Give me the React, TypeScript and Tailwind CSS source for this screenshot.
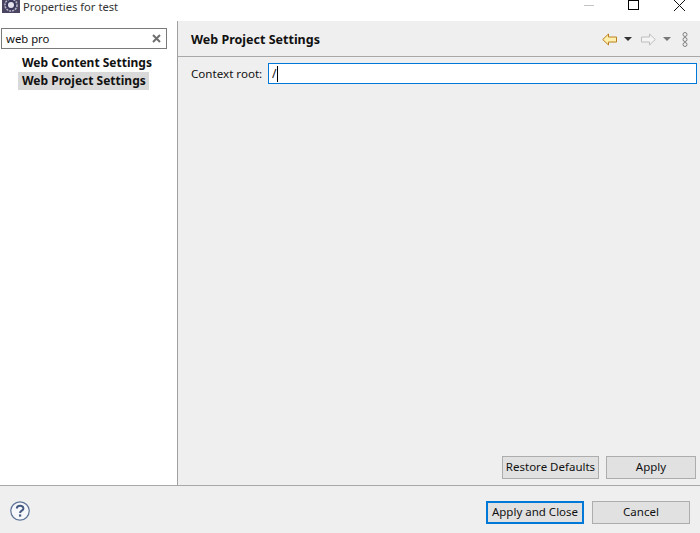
import React from 'react';

const Btn: React.FC<{ label: string; className: string }> = ({ label, className }) => (
  <button className={`flex items-center justify-center bg-[#e1e1e1] pb-[1px] text-[11.5px] leading-none text-[#111] ${className}`}>
    {label}
  </button>
);

const App: React.FC = () => {
  return (
    <div className="flex h-[533px] w-[700px] flex-col overflow-hidden bg-white font-['Noto_Sans','Liberation_Sans',sans-serif] text-[12px] text-[#111]">
      {/* title bar */}
      <div className="flex h-[21px] shrink-0 items-start">
        <svg width="18" height="14" viewBox="0 0 18 14" className="ml-[2px] shrink-0">
          <rect x="0" y="0" width="18" height="13" fill="#4a4560" />
          <circle cx="9" cy="5" r="6" fill="#3c3a5c" stroke="#b9b7c8" strokeWidth="1.6" strokeDasharray="2 1" />
          <circle cx="9" cy="5" r="3" fill="#e4e2ec" />
        </svg>
        <span className="ml-[3px] text-[11.2px] leading-[13px] text-[#333]">Properties for test</span>
        <div className="ml-auto flex items-start">
          <div className="mt-[5px] h-px w-[10px] bg-[#c4c4c4]" />
          <div className="ml-[34px] h-[10px] w-[11px] border border-black" />
          <svg width="11" height="11" viewBox="0 0 11 11" className="ml-[35px] mr-[15px]">
            <path d="M0 0 L11 11 M11 0 L0 11" stroke="#111" strokeWidth="1" />
          </svg>
        </div>
      </div>

      <div className="flex min-h-0 flex-1">
        {/* sidebar */}
        <div className="flex w-[178px] shrink-0 flex-col border-r border-[#a0a0a0] pl-[1px] pt-[7px]">
          <div className="flex h-[21px] w-[166px] items-center border border-[#7a7a7a] pl-[4px] pr-[5px]">
            <span className="text-[11.3px] leading-none">web pro</span>
            <svg width="9" height="9" viewBox="0 0 9 9" className="ml-auto">
              <path d="M1 1 L8 8 M8 1 L1 8" stroke="#6f6f6f" strokeWidth="2" />
            </svg>
          </div>
          <div className="mt-[5px] flex h-[18px] items-center pl-[21px] text-[12px] font-bold">Web Content Settings</div>
          <div className="ml-[17px] flex h-[18px] w-[131px] items-center bg-[#d9d9d9] pl-[4px] text-[12px] font-bold">
            Web Project Settings
          </div>
        </div>

        {/* main panel */}
        <div className="flex min-w-0 flex-1 flex-col bg-[#efefef]">
          <div className="flex h-[36px] shrink-0 items-center border-b border-[#a8a8a8] pl-[13px] pt-[3px]">
            <span className="text-[12.5px] font-bold">Web Project Settings</span>
            <div className="mb-[2px] ml-auto flex items-center">
              <svg width="15" height="13" viewBox="0 0 15 13">
                <path d="M0.7 6.5 L6.5 1 V4 H14.5 V9 H6.5 V12 Z" fill="#fff0b0" stroke="#b9801f" strokeWidth="1" />
              </svg>
              <svg width="8" height="4" viewBox="0 0 8 4" className="ml-[7px]"><path d="M0 0 H8 L4 4 Z" fill="#333" /></svg>
              <svg width="15" height="13" viewBox="0 0 15 13" className="ml-[9px]">
                <path d="M14.3 6.5 L8.5 1 V4 H0.5 V9 H8.5 V12 Z" fill="#f4f4f4" stroke="#bdbdbd" strokeWidth="1" />
              </svg>
              <svg width="8" height="4" viewBox="0 0 8 4" className="ml-[7px]"><path d="M0 0 H8 L4 4 Z" fill="#777" /></svg>
              <svg width="6" height="15" viewBox="0 0 6 15" className="ml-[11px] mr-[12px]">
                <circle cx="3" cy="2.5" r="2" fill="none" stroke="#808080" />
                <circle cx="3" cy="7.5" r="2" fill="none" stroke="#808080" />
                <circle cx="3" cy="12.5" r="2" fill="none" stroke="#808080" />
              </svg>
            </div>
          </div>
          <div className="flex items-center pl-[13px] pt-[6px]">
            <span className="w-[77px] text-[11.6px]">Context root:</span>
            <div className="flex h-[21px] w-[429px] items-center border border-[#0078d7] bg-white pl-[3px] text-[12px]">
              /<span className="ml-[1px] h-[16px] w-px bg-black" />
            </div>
          </div>
          <div className="mt-auto flex justify-end gap-[7px] pb-[6px] pr-[4px]">
            <Btn label="Restore Defaults" className="h-[23px] w-[97px] border border-[#adadad]" />
            <Btn label="Apply" className="h-[23px] w-[90px] border border-[#adadad]" />
          </div>
        </div>
      </div>

      {/* footer */}
      <div className="flex h-[48px] shrink-0 items-start border-t border-[#a8a8a8] bg-[#efefef] pl-[10px]">
        <svg width="20" height="20" viewBox="0 0 20 20" className="mt-[15px]">
          <circle cx="10" cy="10" r="9.2" fill="#f6f7fa" stroke="#5d7396" strokeWidth="1.2" />
          <path d="M6.8 7.6 C6.8 3.8 13.4 3.8 13.4 7.4 C13.4 9.8 10.1 9.6 10.1 12" fill="none" stroke="#44597f" strokeWidth="2" />
          <rect x="9" y="13.4" width="2.2" height="2.2" fill="#44597f" />
        </svg>
        <div className="ml-auto mr-[10px] mt-[15px] flex gap-[8px]">
          <Btn label="Apply and Close" className="h-[23px] w-[98px] border-2 border-[#0078d7]" />
          <Btn label="Cancel" className="h-[23px] w-[98px] border border-[#adadad]" />
        </div>
      </div>
    </div>
  );
};

export default App;
